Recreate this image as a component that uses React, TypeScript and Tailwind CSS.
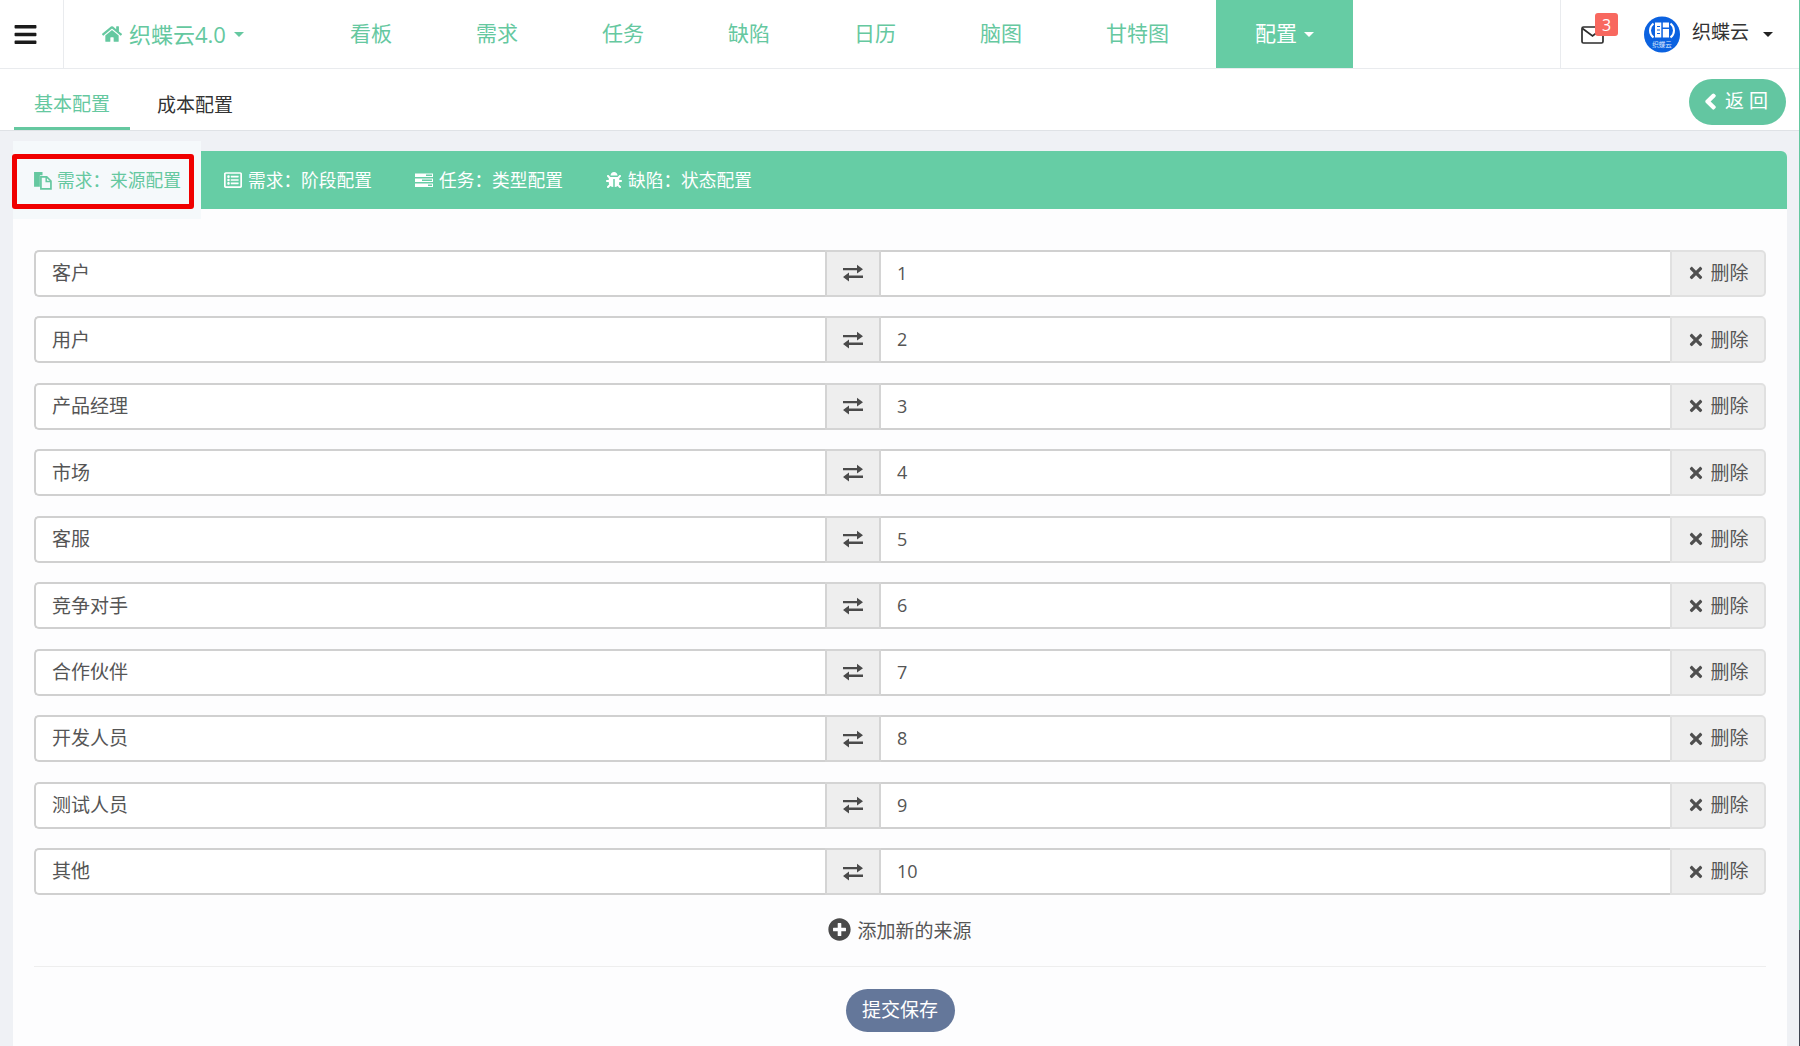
import { FaBars, FaBug, FaChevronLeft, FaHome, FaPlusCircle, FaRegListAlt, FaTimes } from 'react-icons/fa';

const NAV_ITEMS = ['看板', '需求', '任务', '缺陷', '日历', '脑图', '甘特图'];

const SOURCES = [
  { name: '客户', value: '1' },
  { name: '用户', value: '2' },
  { name: '产品经理', value: '3' },
  { name: '市场', value: '4' },
  { name: '客服', value: '5' },
  { name: '竞争对手', value: '6' },
  { name: '合作伙伴', value: '7' },
  { name: '开发人员', value: '8' },
  { name: '测试人员', value: '9' },
  { name: '其他', value: '10' },
];

function Caret({ className }: { className: string }) {
  return <span className={`inline-block h-0 w-0 border-x-[5px] border-t-[5px] border-x-transparent ${className}`} />;
}

function FilesIcon() {
  return (
    <svg viewBox="0 0 18 18" className="h-[19px] w-[19px]">
      <path d="M1 1h8v3H6.500v11H1z" fill="#65c8a0" />
      <path d="M7.500 5.500h5.500l4 4v7.500H7.500z" fill="none" stroke="#65c8a0" strokeWidth="1.600" />
      <path d="M12.500 5.500v4.500h4.500" fill="none" stroke="#65c8a0" strokeWidth="1.400" />
    </svg>
  );
}

function TasksIcon() {
  return (
    <svg viewBox="0 0 18 16" className="h-4 w-[18px] fill-white">
      <path d="M0 1.500h18v3.500H0zM0 6.500h18v3.500H0zM0 11.500h18v3.500H0z" />
      <path d="M11 2.500h6v1.400h-6zM7 7.500h10v1.400H7zM13 12.500h4v1.400h-4z" fill="#66cda5" />
    </svg>
  );
}

function ExchangeIcon() {
  return (
    <svg viewBox="0 0 20 18" className="h-[18px] w-5 fill-[#4a4a4a]">
      <path d="M0 4h14V.8L20 5.200l-6 4.200V6.300H0z" />
      <path d="M20 11.600H6V8.600L0 13l6 4.400v-3.300h14z" />
    </svg>
  );
}

function EnvelopeIcon() {
  return (
    <svg viewBox="0 0 23 18" className="h-[18px] w-[23px]" fill="none" stroke="#2d2d2d" strokeWidth="1.700">
      <rect x="1" y="1" width="21" height="16" rx="1.500" />
      <path d="M1.500 2.500l10 7.500 10-7.500" />
    </svg>
  );
}

function LogoIcon() {
  return (
    <svg viewBox="0 0 36 37" className="h-[37px] w-9">
      <circle cx="18" cy="18.500" r="18" fill="#0b62e0" />
      <path d="M9.500 7.500c-2.500 2-3.500 5-3.500 7s1 5 3.500 7" fill="none" stroke="#fff" strokeWidth="2" />
      <path d="M26.500 7.500c2.500 2 3.500 5 3.500 7s-1 5-3.500 7" fill="none" stroke="#fff" strokeWidth="2" />
      <path d="M11 6.500h6.300v15H11zM18.800 6.500H25v5h-6.200zM18.800 13H25v8.500h-6.200z" fill="#fff" />
      <path d="M13 10.500h3M13 14h3M13 17.500h3" stroke="#0b62e0" strokeWidth="1.200" />
      <text x="18" y="30.500" textAnchor="middle" fontSize="6.500" fill="#dbe8ff">织蝶云</text>
    </svg>
  );
}

function Header() {
  return (
    <header className="flex h-[69px] shrink-0 items-stretch border-b border-[#e9ebee] bg-white">
      <div className="flex w-[64px] items-center border-r border-[#e9ebee] pl-[13px]">
        <FaBars className="text-[25px] text-[#1b1b1b]" />
      </div>
      <div className="flex w-[244px] items-center pl-[38px] text-[21px] text-[#65c8a0]">
        <FaHome className="mr-[7px] text-[20px]" />
        <span className="text-[22px]">织蝶云4.0</span>
        <Caret className="ml-2 border-t-[#65c8a0]" />
      </div>
      <nav className="flex items-stretch text-[21px] text-[#65c8a0]">
        {NAV_ITEMS.map((item) => (
          <a key={item} className="flex items-center px-[42px]">
            {item}
          </a>
        ))}
      </nav>
      <a className="ml-[5px] flex w-[137px] items-center justify-center gap-[7px] bg-[#66cca4] text-[21px] text-white">
        配置
        <Caret className="border-t-white" />
      </a>
      <div className="ml-auto flex w-[239px] items-center border-l border-[#e9ebee]">
        <div className="relative ml-[20px] mt-[2px]">
          <EnvelopeIcon />
          <span className="absolute -top-[13px] left-[14px] flex h-[23px] w-[23px] items-center justify-center rounded-[3px] bg-[#f8685f] text-[16px] text-white">
            3
          </span>
        </div>
        <div className="ml-[40px]">
          <LogoIcon />
        </div>
        <span className="ml-[12px] -mt-[3px] text-[19px] text-[#333]">织蝶云</span>
        <Caret className="ml-[14px] border-t-[#222]" />
      </div>
    </header>
  );
}

function TabsRow() {
  return (
    <div className="flex h-[62px] shrink-0 items-center border-b border-[#dfe2e6] bg-white">
      <div className="ml-[14px] flex h-full w-[116px] items-center justify-center border-b-[3px] border-[#65c8a0] pt-[13px] text-[19px] text-[#65c8a0]">
        基本配置
      </div>
      <div className="ml-[27px] pt-[12px] text-[19px] text-[#333]">成本配置</div>
      <button
        type="button"
        className="ml-auto mr-[13px] mt-[4px] flex h-[46px] w-[97px] items-center justify-center gap-[6px] rounded-full bg-[#63c6a1] text-[19px] text-white"
      >
        <FaChevronLeft className="text-[17px] [stroke-width:50px]" />
        <span className="tracking-[5px]">返回</span>
      </button>
    </div>
  );
}

function SideTabs() {
  return (
    <div className="flex h-[78px] shrink-0">
      <div className="relative flex w-[188px] items-center bg-[#f5f9fb] pl-[20px] pt-[1px] text-[17.700px] text-[#65c8a0]">
        <FilesIcon />
        <span className="ml-[5px]">需求：来源配置</span>
        <div className="absolute -left-[1px] top-[13px] h-[55px] w-[182px] rounded-[3px] border-[5px] border-[#f00000]" />
      </div>
      <div className="flex flex-1 flex-col">
        <div className="flex-1" />
        <div className="flex h-[58px] items-center rounded-tr-[6px] bg-[#66cda5] pl-[23px] pt-[1px] text-[17.700px] text-white">
          <div className="flex w-[191px] items-center">
            <FaRegListAlt className="text-[18px]" />
            <span className="ml-[6px]">需求：阶段配置</span>
          </div>
          <div className="flex w-[191px] items-center">
            <TasksIcon />
            <span className="ml-[6px]">任务：类型配置</span>
          </div>
          <div className="flex items-center">
            <FaBug className="text-[16px]" />
            <span className="ml-[6px]">缺陷：状态配置</span>
          </div>
        </div>
        <div className="h-[10px] bg-[#fdfdfe]" />
      </div>
    </div>
  );
}

function SourceRow({ name, value }: { name: string; value: string }) {
  return (
    <div className="flex h-[46.700px] text-[19px] text-[#555]">
      <div className="flex w-[791px] items-center rounded-l-[5px] border-2 border-r-0 border-[#d0d0d0] bg-white pl-[16px]">
        {name}
      </div>
      <div className="flex w-[56px] items-center justify-center border-2 border-[#d4d4d4] bg-[#eeeeee]">
        <ExchangeIcon />
      </div>
      <div className="flex flex-1 items-center border-y-2 border-[#d0d0d0] bg-white pl-[16px] text-[18px]">{value}</div>
      <div className="flex w-[96px] items-center justify-center gap-[5px] rounded-r-[5px] border-2 border-[#e0e0e0] bg-[#eeeeee]">
        <FaTimes className="text-[18px] text-[#4f4f4f]" />
        删除
      </div>
    </div>
  );
}

export default function App() {
  return (
    <div className="flex h-[1046px] w-full overflow-hidden font-['Open_Sans','Noto_Sans_CJK_SC',sans-serif]">
      <div className="flex min-w-0 flex-1 flex-col">
        <Header />
        <TabsRow />
        <main className="flex min-h-0 flex-1 flex-col bg-[#eff1f5] pl-[13px] pr-[12px] pt-[10px]">
          <div className="flex min-h-0 flex-1 flex-col">
            <SideTabs />
            <div className="flex-1 bg-[#fdfdfe] px-[21px] pt-[31px]">
              <div className="flex flex-col gap-[19.800px]">
                {SOURCES.map((source) => (
                  <SourceRow key={source.name} name={source.name} value={source.value} />
                ))}
              </div>
              <div className="flex h-[72px] items-center justify-center gap-[6px] border-b border-[#eeeeee] pt-[2px] text-[19px] text-[#555]">
                <FaPlusCircle className="-mt-[5px] text-[23px] text-[#4a4a4a]" />
                添加新的来源
              </div>
              <div className="flex justify-center pt-[22px]">
                <button
                  type="button"
                  className="h-[43px] w-[109px] rounded-full bg-[#64779a] text-[19px] text-white"
                >
                  提交保存
                </button>
              </div>
            </div>
          </div>
        </main>
      </div>
      <div className="flex w-[1px] shrink-0 flex-col bg-[#3f4450]">
        <div className="h-[930px] bg-[#65c8a0]" />
      </div>
    </div>
  );
}
